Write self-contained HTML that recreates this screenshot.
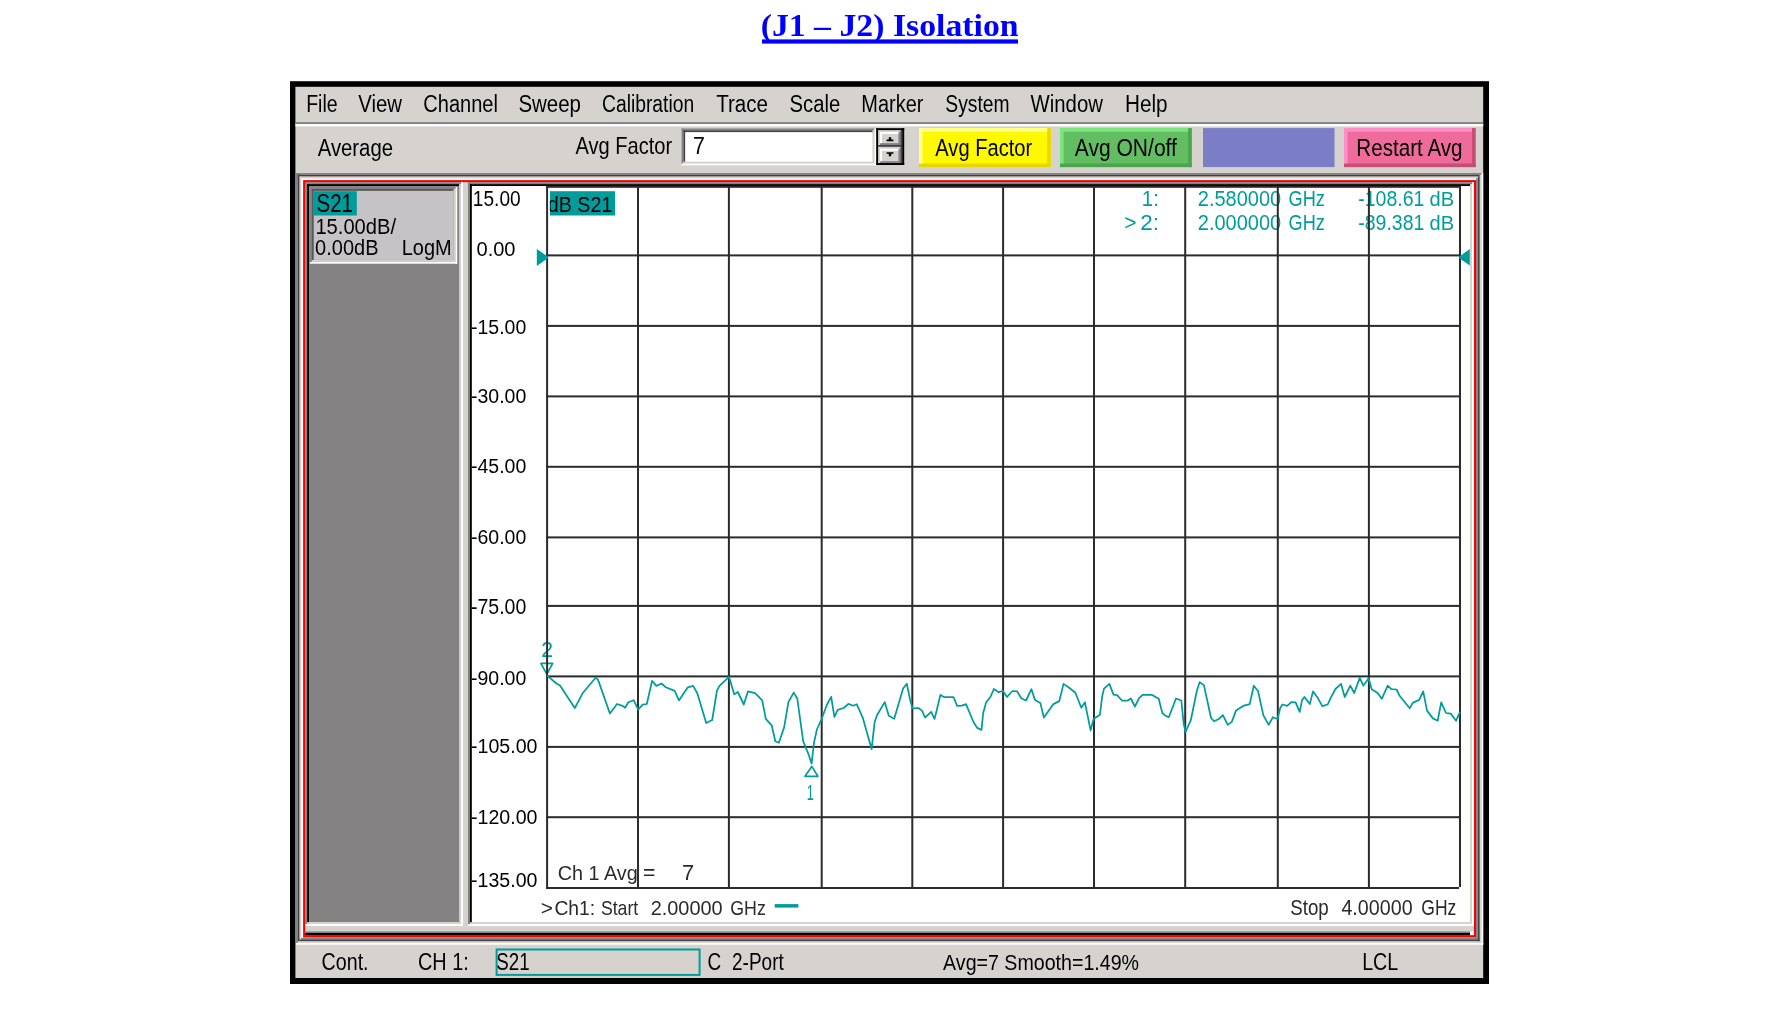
<!DOCTYPE html>
<html lang="en"><head><meta charset="utf-8"><title>(J1 - J2) Isolation</title>
<style>html,body{margin:0;padding:0;background:#fff;overflow:hidden}svg{display:block;will-change:transform}text{white-space:pre}.s{font-family:'Liberation Sans', Arial, sans-serif}.r{font-family:'Liberation Serif', 'Times New Roman', serif;font-weight:bold}</style></head>
<body>
<svg width="1775" height="1009" viewBox="0 0 1775 1009">
<defs><clipPath id="cl"><rect x="549.9" y="191.2" width="65.1" height="24.3"/></clipPath></defs>
<rect x="0.00" y="0.00" width="1775.00" height="1009.00" fill="#fff"/><rect x="762.00" y="39.40" width="256.00" height="4.20" fill="#0000ff"/><rect x="290.00" y="81.20" width="1199.00" height="902.80" fill="#000"/><rect x="295.40" y="86.80" width="1187.80" height="891.20" fill="#d6d3ce"/><rect x="295.40" y="122.10" width="1187.80" height="2.00" fill="#848284"/><rect x="295.40" y="124.10" width="1187.80" height="2.30" fill="#fff"/>
<rect x="681.60" y="163.40" width="194.60" height="1.90" fill="#fff"/><rect x="874.30" y="128.50" width="1.90" height="36.80" fill="#fff"/><rect x="681.60" y="128.50" width="192.70" height="1.90" fill="#848284"/><rect x="681.60" y="128.50" width="1.90" height="34.90" fill="#848284"/><rect x="683.50" y="161.50" width="190.80" height="1.90" fill="#d6d3ce"/><rect x="872.40" y="130.40" width="1.90" height="33.00" fill="#d6d3ce"/><rect x="683.50" y="130.40" width="188.90" height="1.90" fill="#424142"/><rect x="683.50" y="130.40" width="1.90" height="31.10" fill="#424142"/><rect x="685.30" y="132.20" width="187.10" height="29.40" fill="#fff"/><rect x="878.10" y="130.10" width="24.10" height="33.00" fill="#d6d3ce"/><rect x="878.10" y="145.00" width="24.10" height="1.90" fill="#424142"/><rect x="900.30" y="130.10" width="1.90" height="16.80" fill="#424142"/><rect x="878.10" y="130.10" width="22.20" height="1.90" fill="#d6d3ce"/><rect x="878.10" y="130.10" width="1.90" height="14.90" fill="#d6d3ce"/><rect x="880.00" y="143.10" width="20.30" height="1.90" fill="#848284"/><rect x="898.40" y="132.00" width="1.90" height="13.00" fill="#848284"/><rect x="880.00" y="132.00" width="18.40" height="1.90" fill="#fff"/><rect x="880.00" y="132.00" width="1.90" height="11.10" fill="#fff"/><rect x="878.10" y="163.10" width="24.10" height="1.90" fill="#424142"/><rect x="900.30" y="146.90" width="1.90" height="18.10" fill="#424142"/><rect x="878.10" y="146.90" width="22.20" height="1.90" fill="#d6d3ce"/><rect x="878.10" y="146.90" width="1.90" height="16.20" fill="#d6d3ce"/><rect x="880.00" y="161.20" width="20.30" height="1.90" fill="#848284"/><rect x="898.40" y="148.80" width="1.90" height="14.30" fill="#848284"/><rect x="880.00" y="148.80" width="18.40" height="1.90" fill="#fff"/><rect x="880.00" y="148.80" width="1.90" height="12.40" fill="#fff"/><rect x="876.20" y="128.20" width="28.00" height="1.90" fill="#000"/><rect x="876.20" y="163.10" width="28.00" height="1.90" fill="#000"/><rect x="876.20" y="128.20" width="1.90" height="36.80" fill="#000"/><rect x="902.20" y="128.20" width="2.00" height="36.80" fill="#000"/><path d="M886.6 141.2 L893.4 141.2 L893.4 139.6 L891.2 139.6 L891.2 137.2 L888.8 137.2 L888.8 139.6 L886.6 139.6 Z" fill="#000"/><path d="M886.6 152.2 L893.4 152.2 L893.4 153.8 L891.2 153.8 L891.2 156.2 L888.8 156.2 L888.8 153.8 L886.6 153.8 Z" fill="#000"/><rect x="919.00" y="128.10" width="131.80" height="39.00" fill="#fff900"/><rect x="919.00" y="163.50" width="131.80" height="3.60" fill="#e7d700"/><rect x="1047.20" y="128.10" width="3.60" height="39.00" fill="#e7d700"/><rect x="919.00" y="128.10" width="128.20" height="3.60" fill="#ffff8c"/><rect x="919.00" y="128.10" width="3.60" height="35.40" fill="#ffff8c"/><rect x="1060.00" y="128.10" width="131.70" height="39.00" fill="#63be63"/><rect x="1060.00" y="163.50" width="131.70" height="3.60" fill="#4aa64a"/><rect x="1188.10" y="128.10" width="3.60" height="39.00" fill="#4aa64a"/><rect x="1060.00" y="128.10" width="128.10" height="3.60" fill="#7be77b"/><rect x="1060.00" y="128.10" width="3.60" height="35.40" fill="#7be77b"/><rect x="1203.00" y="128.10" width="131.50" height="39.00" fill="#7b7dc6"/><rect x="1344.00" y="128.10" width="131.60" height="39.00" fill="#ef6b9c"/><rect x="1344.00" y="163.50" width="131.60" height="3.60" fill="#c64d73"/><rect x="1472.00" y="128.10" width="3.60" height="39.00" fill="#c64d73"/><rect x="1344.00" y="128.10" width="128.00" height="3.60" fill="#ff8ec6"/><rect x="1344.00" y="128.10" width="3.60" height="35.40" fill="#ff8ec6"/>
<rect x="296.00" y="942.90" width="1187.20" height="1.80" fill="#fff"/><rect x="1481.40" y="173.00" width="1.80" height="771.70" fill="#fff"/><rect x="296.00" y="173.00" width="1185.40" height="1.80" fill="#848284"/><rect x="296.00" y="173.00" width="1.80" height="769.90" fill="#848284"/><rect x="297.80" y="941.10" width="1183.60" height="1.80" fill="#d6d3ce"/><rect x="1479.60" y="174.80" width="1.80" height="768.10" fill="#d6d3ce"/><rect x="297.80" y="174.80" width="1181.80" height="1.80" fill="#424142"/><rect x="297.80" y="174.80" width="1.80" height="766.30" fill="#424142"/><rect x="299.60" y="939.30" width="1180.00" height="1.80" fill="#424142"/><rect x="1477.80" y="176.60" width="1.80" height="764.50" fill="#424142"/><rect x="299.60" y="176.60" width="1178.20" height="1.80" fill="#d6d3ce"/><rect x="299.60" y="176.60" width="1.80" height="762.70" fill="#d6d3ce"/><rect x="301.40" y="937.50" width="1176.40" height="1.80" fill="#848284"/><rect x="1476.00" y="178.40" width="1.80" height="760.90" fill="#848284"/><rect x="301.40" y="178.40" width="1174.60" height="1.80" fill="#fff"/><rect x="301.40" y="178.40" width="1.80" height="759.10" fill="#fff"/><rect x="303.10" y="180.10" width="1172.90" height="757.10" fill="#ff0000"/><rect x="305.20" y="182.20" width="1168.70" height="752.90" fill="#d6d3ce"/><rect x="305.20" y="931.40" width="1164.80" height="1.60" fill="#848284"/><rect x="305.20" y="933.00" width="1164.80" height="2.10" fill="#000"/><rect x="1470.00" y="931.40" width="3.90" height="3.70" fill="#fff"/><rect x="305.20" y="924.05" width="157.80" height="1.95" fill="#fff"/><rect x="461.05" y="182.20" width="1.95" height="743.80" fill="#fff"/><rect x="305.20" y="182.20" width="155.85" height="1.95" fill="#848284"/><rect x="305.20" y="182.20" width="1.95" height="741.85" fill="#848284"/><rect x="307.15" y="922.10" width="153.90" height="1.95" fill="#d6d3ce"/><rect x="459.10" y="184.15" width="1.95" height="739.90" fill="#d6d3ce"/><rect x="307.15" y="184.15" width="151.95" height="1.95" fill="#000"/><rect x="307.15" y="184.15" width="1.95" height="737.95" fill="#000"/><rect x="309.10" y="186.10" width="150.00" height="735.90" fill="#858284"/><rect x="468.00" y="924.05" width="1005.90" height="1.95" fill="#fff"/><rect x="1471.95" y="182.20" width="1.95" height="743.80" fill="#fff"/><rect x="468.00" y="182.20" width="1003.95" height="1.95" fill="#848284"/><rect x="468.00" y="182.20" width="1.95" height="741.85" fill="#848284"/><rect x="469.95" y="922.10" width="1002.00" height="1.95" fill="#d6d3ce"/><rect x="1470.00" y="184.15" width="1.95" height="739.90" fill="#d6d3ce"/><rect x="469.95" y="184.15" width="1000.05" height="1.95" fill="#000"/><rect x="469.95" y="184.15" width="1.95" height="737.95" fill="#000"/><rect x="471.90" y="186.10" width="998.10" height="735.90" fill="#fff"/>
<rect x="310.00" y="261.80" width="147.20" height="1.90" fill="#fff"/><rect x="455.30" y="187.10" width="1.90" height="76.60" fill="#fff"/><rect x="310.00" y="187.10" width="145.30" height="1.90" fill="#848284"/><rect x="310.00" y="187.10" width="1.90" height="74.70" fill="#848284"/><rect x="311.90" y="259.90" width="143.40" height="1.90" fill="#d6d3ce"/><rect x="453.40" y="189.00" width="1.90" height="72.80" fill="#d6d3ce"/><rect x="311.90" y="189.00" width="141.50" height="1.90" fill="#5a595a"/><rect x="311.90" y="189.00" width="1.90" height="70.90" fill="#5a595a"/><rect x="313.80" y="190.90" width="139.60" height="69.00" fill="#c6c3c6"/><rect x="313.80" y="191.20" width="43.00" height="24.30" fill="#009c9c"/><path d="M540.9 663.4 L552.7 663.4 L546.8 674.2 Z" fill="none" stroke="#009c9c" stroke-width="1.7" stroke-linejoin="round"/><path d="M811.8 766.4 L817.9 776.3 L805.0 776.3 Z" fill="none" stroke="#009c9c" stroke-width="1.7" stroke-linejoin="round"/><rect x="549.90" y="191.20" width="65.10" height="24.30" fill="#009c9c"/><rect x="496.6" y="949.5" width="203" height="25.4" fill="none" stroke="#009c9c" stroke-width="2"/>
<text class="r" x="760.65" y="36.00" font-size="30.99" fill="#0000ff" textLength="258.00" lengthAdjust="spacingAndGlyphs">(J1 – J2) Isolation</text>
<text class="s" x="306.14" y="111.55" font-size="23.36" fill="#000" textLength="31.47" lengthAdjust="spacingAndGlyphs">File</text>
<text class="s" x="358.20" y="111.55" font-size="24.03" fill="#000" textLength="43.79" lengthAdjust="spacingAndGlyphs">View</text>
<text class="s" x="423.30" y="111.55" font-size="23.36" fill="#000" textLength="74.61" lengthAdjust="spacingAndGlyphs">Channel</text>
<text class="s" x="518.38" y="111.55" font-size="24.03" fill="#000" textLength="62.59" lengthAdjust="spacingAndGlyphs">Sweep</text>
<text class="s" x="602.04" y="111.55" font-size="23.36" fill="#000" textLength="92.13" lengthAdjust="spacingAndGlyphs">Calibration</text>
<text class="s" x="716.19" y="111.55" font-size="24.03" fill="#000" textLength="51.82" lengthAdjust="spacingAndGlyphs">Trace</text>
<text class="s" x="789.59" y="111.55" font-size="23.36" fill="#000" textLength="50.65" lengthAdjust="spacingAndGlyphs">Scale</text>
<text class="s" x="861.30" y="111.55" font-size="23.36" fill="#000" textLength="62.12" lengthAdjust="spacingAndGlyphs">Marker</text>
<text class="s" x="945.34" y="111.55" font-size="24.03" fill="#000" textLength="64.30" lengthAdjust="spacingAndGlyphs">System</text>
<text class="s" x="1030.60" y="111.55" font-size="23.36" fill="#000" textLength="72.34" lengthAdjust="spacingAndGlyphs">Window</text>
<text class="s" x="1124.94" y="111.55" font-size="23.36" fill="#000" textLength="42.63" lengthAdjust="spacingAndGlyphs">Help</text>
<text class="s" x="317.70" y="155.85" font-size="23.74" fill="#000" textLength="75.35" lengthAdjust="spacingAndGlyphs">Average</text>
<text class="s" x="575.40" y="153.80" font-size="23.60" fill="#000" textLength="96.84" lengthAdjust="spacingAndGlyphs">Avg Factor</text>
<text class="s" x="693.03" y="153.80" font-size="23.60" fill="#000" textLength="11.85" lengthAdjust="spacingAndGlyphs">7</text>
<text class="s" x="935.30" y="155.85" font-size="23.67" fill="#000" textLength="96.94" lengthAdjust="spacingAndGlyphs">Avg Factor</text>
<text class="s" x="1074.80" y="155.85" font-size="23.01" fill="#000" textLength="102.08" lengthAdjust="spacingAndGlyphs">Avg ON/off</text>
<text class="s" x="1356.35" y="155.85" font-size="23.67" fill="#000" textLength="106.21" lengthAdjust="spacingAndGlyphs">Restart Avg</text>
<text class="s" x="316.58" y="212.05" font-size="25.18" fill="#000" textLength="36.43" lengthAdjust="spacingAndGlyphs">S21</text>
<text class="s" x="315.39" y="234.35" font-size="21.26" fill="#000" textLength="80.68" lengthAdjust="spacingAndGlyphs">15.00dB/</text>
<text class="s" x="315.10" y="254.65" font-size="21.26" fill="#000" textLength="63.39" lengthAdjust="spacingAndGlyphs">0.00dB</text>
<text class="s" x="401.70" y="254.65" font-size="21.87" fill="#000" textLength="49.92" lengthAdjust="spacingAndGlyphs">LogM</text>
<text class="s" x="472.87" y="206.35" font-size="21.29" fill="#000" textLength="47.74" lengthAdjust="spacingAndGlyphs">15.00</text>
<text class="s" x="476.50" y="255.85" font-size="20.86" fill="#000" textLength="39.03" lengthAdjust="spacingAndGlyphs">0.00</text>
<text class="s" x="471.02" y="334.15" font-size="20.43" fill="#000" textLength="55.27" lengthAdjust="spacingAndGlyphs">-15.00</text>
<text class="s" x="471.02" y="402.55" font-size="20.58" fill="#000" textLength="55.27" lengthAdjust="spacingAndGlyphs">-30.00</text>
<text class="s" x="471.02" y="473.15" font-size="20.29" fill="#000" textLength="55.27" lengthAdjust="spacingAndGlyphs">-45.00</text>
<text class="s" x="471.02" y="543.85" font-size="21.01" fill="#000" textLength="55.27" lengthAdjust="spacingAndGlyphs">-60.00</text>
<text class="s" x="471.02" y="614.05" font-size="21.15" fill="#000" textLength="55.27" lengthAdjust="spacingAndGlyphs">-75.00</text>
<text class="s" x="471.02" y="684.85" font-size="20.43" fill="#000" textLength="55.27" lengthAdjust="spacingAndGlyphs">-90.00</text>
<text class="s" x="471.02" y="753.05" font-size="20.72" fill="#000" textLength="66.40" lengthAdjust="spacingAndGlyphs">-105.00</text>
<text class="s" x="471.02" y="824.05" font-size="21.01" fill="#000" textLength="66.40" lengthAdjust="spacingAndGlyphs">-120.00</text>
<text class="s" x="471.02" y="886.95" font-size="20.72" fill="#000" textLength="66.40" lengthAdjust="spacingAndGlyphs">-135.00</text>
<text class="s" x="547.81" y="212.25" font-size="22.10" fill="#000" textLength="64.58" lengthAdjust="spacingAndGlyphs" clip-path="url(#cl)">dB S21</text>
<text class="s" x="1141.86" y="206.35" font-size="21.58" fill="#009c9c" textLength="17.06" lengthAdjust="spacingAndGlyphs">1:</text>
<text class="s" x="1124.15" y="230.05" font-size="21.58" fill="#009c9c" textLength="12.28" lengthAdjust="spacingAndGlyphs">&gt;</text>
<text class="s" x="1140.38" y="230.05" font-size="21.58" fill="#009c9c" textLength="18.74" lengthAdjust="spacingAndGlyphs">2:</text>
<text class="s" x="1197.80" y="206.35" font-size="21.58" fill="#009c9c" textLength="83.32" lengthAdjust="spacingAndGlyphs">2.580000</text>
<text class="s" x="1288.59" y="206.35" font-size="21.58" fill="#009c9c" textLength="36.32" lengthAdjust="spacingAndGlyphs">GHz</text>
<text class="s" x="1197.80" y="230.05" font-size="21.58" fill="#009c9c" textLength="83.32" lengthAdjust="spacingAndGlyphs">2.000000</text>
<text class="s" x="1288.59" y="230.05" font-size="21.58" fill="#009c9c" textLength="36.32" lengthAdjust="spacingAndGlyphs">GHz</text>
<text class="s" x="1358.22" y="206.35" font-size="21.58" fill="#009c9c" textLength="66.09" lengthAdjust="spacingAndGlyphs">-108.61</text>
<text class="s" x="1429.60" y="206.35" font-size="20.98" fill="#009c9c" textLength="24.57" lengthAdjust="spacingAndGlyphs">dB</text>
<text class="s" x="1358.22" y="230.05" font-size="21.58" fill="#009c9c" textLength="66.09" lengthAdjust="spacingAndGlyphs">-89.381</text>
<text class="s" x="1429.60" y="230.05" font-size="20.98" fill="#009c9c" textLength="24.57" lengthAdjust="spacingAndGlyphs">dB</text>
<text class="s" x="557.71" y="879.85" font-size="20.70" fill="#2a2a2a" textLength="79.98" lengthAdjust="spacingAndGlyphs">Ch 1 Avg</text>
<text class="s" x="642.94" y="879.85" font-size="21.29" fill="#2a2a2a" textLength="12.41" lengthAdjust="spacingAndGlyphs">=</text>
<text class="s" x="681.90" y="879.85" font-size="21.29" fill="#2a2a2a" textLength="12.21" lengthAdjust="spacingAndGlyphs">7</text>
<text class="s" x="540.76" y="914.75" font-size="21.01" fill="#2a2a2a" textLength="12.16" lengthAdjust="spacingAndGlyphs">&gt;</text>
<text class="s" x="554.44" y="914.75" font-size="20.42" fill="#2a2a2a" textLength="40.75" lengthAdjust="spacingAndGlyphs">Ch1:</text>
<text class="s" x="600.92" y="914.75" font-size="21.01" fill="#2a2a2a" textLength="37.32" lengthAdjust="spacingAndGlyphs">Start</text>
<text class="s" x="650.70" y="914.75" font-size="21.01" fill="#2a2a2a" textLength="71.99" lengthAdjust="spacingAndGlyphs">2.00000</text>
<text class="s" x="730.21" y="914.75" font-size="21.01" fill="#2a2a2a" textLength="35.58" lengthAdjust="spacingAndGlyphs">GHz</text>
<text class="s" x="1290.26" y="915.35" font-size="21.29" fill="#2a2a2a" textLength="38.52" lengthAdjust="spacingAndGlyphs">Stop</text>
<text class="s" x="1341.41" y="915.35" font-size="21.29" fill="#2a2a2a" textLength="71.18" lengthAdjust="spacingAndGlyphs">4.00000</text>
<text class="s" x="1421.33" y="915.35" font-size="21.29" fill="#2a2a2a" textLength="34.95" lengthAdjust="spacingAndGlyphs">GHz</text>
<text class="s" x="321.62" y="970.45" font-size="23.60" fill="#000" textLength="46.95" lengthAdjust="spacingAndGlyphs">Cont.</text>
<text class="s" x="417.91" y="970.45" font-size="23.60" fill="#000" textLength="50.81" lengthAdjust="spacingAndGlyphs">CH 1:</text>
<text class="s" x="496.36" y="970.45" font-size="23.60" fill="#000" textLength="33.36" lengthAdjust="spacingAndGlyphs">S21</text>
<text class="s" x="707.56" y="970.45" font-size="23.60" fill="#000" textLength="13.64" lengthAdjust="spacingAndGlyphs">C</text>
<text class="s" x="732.05" y="970.45" font-size="23.60" fill="#000" textLength="51.71" lengthAdjust="spacingAndGlyphs">2-Port</text>
<text class="s" x="943.10" y="970.45" font-size="22.94" fill="#000" textLength="195.96" lengthAdjust="spacingAndGlyphs">Avg=7 Smooth=1.49%</text>
<text class="s" x="1362.13" y="970.45" font-size="23.60" fill="#000" textLength="36.05" lengthAdjust="spacingAndGlyphs">LCL</text>
<text class="s" x="541.23" y="657.15" font-size="22.73" fill="#009c9c" textLength="11.85" lengthAdjust="spacingAndGlyphs">2</text>
<text class="s" x="806.68" y="799.85" font-size="21.44" fill="#009c9c" textLength="7.11" lengthAdjust="spacingAndGlyphs">1</text>
<rect x="546.10" y="186.00" width="2.00" height="702.90" fill="#2b2b2b"/><rect x="637.00" y="186.00" width="2.00" height="702.90" fill="#2b2b2b"/><rect x="727.90" y="186.00" width="2.00" height="702.90" fill="#2b2b2b"/><rect x="820.70" y="186.00" width="2.00" height="702.90" fill="#2b2b2b"/><rect x="911.30" y="186.00" width="2.00" height="702.90" fill="#2b2b2b"/><rect x="1002.10" y="186.00" width="2.00" height="702.90" fill="#2b2b2b"/><rect x="1093.00" y="186.00" width="2.00" height="702.90" fill="#2b2b2b"/><rect x="1184.20" y="186.00" width="2.00" height="702.90" fill="#2b2b2b"/><rect x="1276.80" y="186.00" width="2.00" height="702.90" fill="#2b2b2b"/><rect x="1367.90" y="186.00" width="2.00" height="702.90" fill="#2b2b2b"/><rect x="1459.00" y="186.00" width="2.00" height="701.10" fill="#2b2b2b"/><rect x="546.10" y="185.80" width="914.90" height="2.00" fill="#2b2b2b"/><rect x="546.10" y="254.40" width="914.90" height="2.00" fill="#2b2b2b"/><rect x="546.10" y="324.90" width="914.90" height="2.00" fill="#2b2b2b"/><rect x="546.10" y="395.40" width="914.90" height="2.00" fill="#2b2b2b"/><rect x="546.10" y="465.80" width="914.90" height="2.00" fill="#2b2b2b"/><rect x="546.10" y="536.40" width="914.90" height="2.00" fill="#2b2b2b"/><rect x="546.10" y="604.90" width="914.90" height="2.00" fill="#2b2b2b"/><rect x="546.10" y="675.40" width="914.90" height="2.00" fill="#2b2b2b"/><rect x="546.10" y="745.90" width="914.90" height="2.00" fill="#2b2b2b"/><rect x="546.10" y="816.20" width="914.90" height="2.00" fill="#2b2b2b"/><rect x="546.10" y="887.00" width="912.90" height="2.00" fill="#2b2b2b"/>
<path d="M536.8 248.9 L547.9 256.6 L547.9 258.2 L536.8 266 Z" fill="#009c9c"/><path d="M1469.8 249 L1459.3 256.6 L1459.3 258.2 L1469.8 265.4 Z" fill="#009c9c"/><polyline points="546.9,675.4 556.4,683.5 560.0,685.5 574.8,708.1 582.6,693.3 595.6,677.8 598.0,679.6 609.9,713.5 617.0,704.0 623.0,706.1 625.1,707.8 628.3,702.2 633.7,700.2 638.2,709.7 642.6,704.6 646.8,704.0 652.1,680.8 656.3,685.9 661.6,683.5 665.8,687.3 674.7,690.9 678.9,700.4 687.8,687.3 693.1,685.9 697.3,693.3 706.2,723.0 712.2,720.0 716.9,690.9 719.3,686.1 729.0,676.8 734.3,694.4 737.8,692.0 743.8,704.5 747.9,691.4 755.1,693.2 762.2,700.3 765.8,718.8 771.7,725.3 775.3,741.3 778.9,742.8 784.2,727.1 788.4,702.1 793.7,692.6 797.3,698.5 803.2,741.3 808.4,753.9 811.6,763.6 814.0,742.6 816.9,729.5 821.7,718.8 827.0,704.5 831.2,696.8 834.4,717.0 837.7,709.8 843.7,708.0 848.4,703.9 853.2,705.7 856.7,704.2 862.7,717.6 871.6,749.1 874.6,722.3 877.0,715.2 884.7,702.1 888.8,715.8 894.2,718.8 903.1,688.5 906.8,683.8 910.1,699.9 912.5,708.3 918.4,708.0 922.0,710.6 925.0,717.5 931.2,711.8 934.5,719.0 936.9,709.5 940.4,694.9 944.0,697.0 953.5,697.0 957.1,705.9 961.8,705.6 966.0,704.1 973.7,722.5 977.3,727.9 981.5,729.9 983.2,713.0 986.2,702.3 990.4,697.0 993.9,689.0 998.7,692.2 1002.9,691.0 1007.0,697.0 1012.4,691.0 1017.1,691.4 1021.3,698.2 1026.0,700.5 1031.4,689.2 1035.0,699.9 1040.3,702.9 1043.9,717.5 1053.4,704.1 1059.3,701.1 1063.5,683.9 1068.8,687.5 1075.4,692.8 1081.3,707.7 1084.9,702.3 1090.6,730.3 1093.6,719.0 1099.9,714.8 1102.2,696.4 1104.0,688.6 1109.4,683.9 1113.5,694.6 1117.1,695.2 1121.9,700.5 1127.8,700.5 1130.8,698.5 1134.9,706.5 1139.1,698.2 1142.7,694.9 1152.2,694.9 1158.7,698.8 1162.3,713.0 1164.7,715.2 1168.8,717.2 1176.0,698.5 1181.3,700.5 1183.7,723.7 1185.5,732.0 1190.8,720.2 1196.8,691.0 1199.7,682.1 1203.9,685.1 1211.0,717.8 1214.0,721.3 1218.8,719.0 1222.9,715.2 1227.7,724.9 1231.8,721.9 1236.0,710.6 1243.1,705.9 1249.7,704.1 1253.8,685.7 1258.0,691.0 1263.4,715.4 1268.7,724.9 1272.9,717.2 1277.6,719.0 1280.1,708.3 1282.5,704.5 1287.2,705.9 1291.4,702.1 1295.6,702.3 1299.7,711.8 1302.1,699.9 1304.5,697.0 1309.8,704.1 1313.0,691.4 1317.6,697.6 1322.3,706.1 1327.7,704.5 1330.6,698.2 1335.4,689.0 1341.1,683.9 1344.7,697.0 1350.3,685.7 1354.2,693.0 1359.8,677.9 1363.3,685.7 1368.7,678.3 1371.7,689.2 1377.6,693.0 1381.8,698.8 1387.7,685.7 1391.3,689.2 1396.6,689.5 1399.6,695.8 1409.7,708.3 1412.7,702.9 1419.2,699.9 1423.2,691.4 1427.0,710.6 1432.9,718.4 1437.7,720.7 1441.2,702.3 1446.0,713.0 1450.7,713.6 1456.1,720.7 1460.0,711.8" fill="none" stroke="#009c9c" stroke-width="1.75" stroke-linejoin="round" stroke-linecap="butt"/><rect x="774.70" y="904.10" width="23.70" height="3.50" fill="#009c9c"/>
</svg>
</body></html>
